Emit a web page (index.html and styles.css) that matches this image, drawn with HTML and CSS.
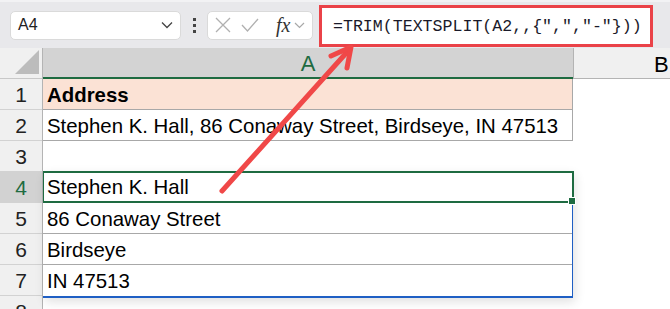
FILE: index.html
```html
<!DOCTYPE html>
<html lang="en">
<head>
  <meta charset="UTF-8">
  <title>TEXTSPLIT</title>
  <link rel="stylesheet" href="styles.css">
</head>
<body>

<div class="app">
  <!-- formula bar -->
  <div class="toolbar">
    <div class="namebox">
      <span>A4</span>
      <svg width="12" height="8" viewBox="0 0 12 8"><path d="M1 1.5 L6 6.5 L11 1.5" fill="none" stroke="#444" stroke-width="1.3"/></svg>
    </div>
    <div class="dots"><i></i><i></i><i></i></div>
    <div class="fnbox">
      <svg width="16" height="16" viewBox="0 0 16 16"><path d="M1 1 L15 15 M15 1 L1 15" stroke="#b0b0b0" stroke-width="1.3"/></svg>
      <svg width="18" height="14" viewBox="0 0 18 14"><path d="M1 7 L6.5 13 L17 1" fill="none" stroke="#b0b0b0" stroke-width="1.3"/></svg>
      <span class="fx">fx</span>
      <svg width="11" height="7" viewBox="0 0 11 7"><path d="M1 1 L5.5 5.5 L10 1" fill="none" stroke="#a8a8a8" stroke-width="1.2"/></svg>
    </div>
    <div class="formula">=TRIM(TEXTSPLIT(A2,,{",","-"}))</div>
  </div>

  <!-- sheet -->
  <div class="sheet">
    <div class="rowheads">
      <div class="corner"><span class="tri"></span></div>
      <div class="rh">1</div>
      <div class="rh">2</div>
      <div class="rh">3</div>
      <div class="rh active">4</div>
      <div class="rh">5</div>
      <div class="rh">6</div>
      <div class="rh">7</div>
      <div class="rh">8</div>
    </div>

    <div class="cola">
      <div class="colhead active">A</div>
      <div class="cell head">Address</div>
      <div class="cell boxed">Stephen K. Hall, 86 Conaway Street, Birdseye, IN 47513</div>
      <div class="cell blank"></div>
      <div class="spill">
        <div class="cell sel">Stephen K. Hall<span class="handle"></span></div>
        <div class="cell line">86 Conaway Street</div>
        <div class="cell line">Birdseye</div>
        <div class="cell">IN 47513</div>
      </div>
    </div>

    <div class="colb">
      <div class="colhead">B</div>
    </div>
  </div>

  <svg class="arrow" width="670" height="309" viewBox="0 0 670 309">
    <g stroke="#f04848" stroke-width="5" stroke-linecap="round" stroke-linejoin="round" fill="none">
      <path d="M222 191 L348 51"/>
      <path d="M331 56 L351 47 L347 68"/>
    </g>
  </svg>
</div>

</body>
</html>
```

FILE: styles.css
```css
body {
  margin: 0;
  font-family: "Liberation Sans", Arial, sans-serif;
  background-color: #fff;
  color: #000;
}
.app {
  position: relative;
  width: 670px;
  height: 309px;
  overflow: hidden;
}
.toolbar {
  height: 48px;
  background-color: #e8e8eb;
  border-top: 2px solid #f2f2f4;
  box-sizing: border-box;
  display: flex;
  align-items: center;
  padding-left: 10px;
}
.namebox {
  width: 171px;
  height: 29px;
  box-sizing: border-box;
  background-color: #fff;
  border: 1px solid #dadada;
  border-radius: 5px;
  display: flex;
  align-items: center;
  justify-content: space-between;
  padding: 0 7px 0 7px;
  font-size: 16px;
  color: #222;
}
.dots {
  width: 26px;
  display: flex;
  flex-direction: column;
  align-items: center;
  gap: 3px;
}
.dots i {
  width: 3px;
  height: 3px;
  background-color: #444;
}
.fnbox {
  width: 106px;
  height: 29px;
  box-sizing: border-box;
  background-color: #fff;
  border: 1px solid #dadada;
  border-radius: 5px;
  display: flex;
  align-items: center;
  gap: 10px;
  padding-left: 7px;
}
.fx {
  font-family: "Liberation Serif", serif;
  font-style: italic;
  font-size: 20px;
  color: #333;
  margin-left: 7px;
  margin-right: -6px;
}
.formula {
  margin-left: 6px;
  width: 334px;
  height: 42px;
  box-sizing: border-box;
  border: 3px solid #ea4248;
  background-color: #fff;
  font-family: "Liberation Mono", monospace;
  font-size: 16.6px;
  color: #1a1a2a;
  padding-left: 11px;
  display: flex;
  align-items: center;
  margin-top: 2px;
}
.sheet {
  display: flex;
  font-size: 20.4px;
}
.rowheads {
  width: 42px;
  flex-shrink: 0;
  background-color: #f0f0f0;
  border-right: 1px solid #b4b4b4;
  font-size: 21px;
}
.corner {
  height: 31px;
  box-sizing: border-box;
  border-bottom: 1px solid #c8c8c8;
  display: flex;
  justify-content: flex-end;
  align-items: flex-end;
  padding: 0 3px 4px 0;
}
.tri {
  width: 0;
  height: 0;
  border-left: 24px solid transparent;
  border-bottom: 24px solid #bcbcbc;
}
.rh {
  height: 31px;
  box-sizing: border-box;
  border-bottom: 1px solid #d2d2d2;
  text-align: center;
  line-height: 31px;
  color: #222;
}
.rh.active {
  background-color: #d2d2d2;
  color: #1e6b41;
}
.colhead {
  height: 31px;
  box-sizing: border-box;
  background-color: #f0f0f0;
  border-bottom: 1px solid #b4b4b4;
  text-align: center;
  line-height: 33px;
  font-size: 22px;
}
.colhead.active {
  background-color: #d3d3d3;
  color: #1e6b41;
  border-bottom: 2px solid #1e6b41;
  line-height: 32px;
}
.cola {
  width: 530px;
  flex-shrink: 0;
}
.colb {
  flex: 1;
  min-width: 0;
  overflow: hidden;
}
.colb .colhead {
  border-left: 1px solid #b4b4b4;
  text-align: left;
  padding-left: 80px;
  white-space: nowrap;
}
.cell {
  height: 31px;
  box-sizing: border-box;
  padding-left: 4px;
  line-height: 32px;
  white-space: nowrap;
}
.head {
  background-color: #fbe2d5;
  font-weight: bold;
  border-right: 1px solid #a8a8a8;
  border-bottom: 1px solid #a8a8a8;
}
.boxed {
  border-right: 1px solid #a8a8a8;
  border-bottom: 1px solid #a8a8a8;
}
.spill {
  border-right: 1px solid #1f5fc4;
  border-bottom: 2px solid #1f5fc4;
  box-shadow: 2px 4px 10px rgba(0, 0, 0, 0.12);
  margin-top: -1px;
}
.sel {
  position: relative;
  border: 2px solid #1e6b41;
  border-left-width: 1px;
  margin-right: -2px;
  height: 32px;
  padding-left: 3px;
  line-height: 29px;
}
.handle {
  position: absolute;
  right: -4px;
  bottom: -4px;
  width: 6px;
  height: 6px;
  background-color: #1e6b41;
  border: 1px solid #fff;
}
.line {
  border-bottom: 1px solid #a8a8a8;
}
.arrow {
  position: absolute;
  left: 0;
  top: 0;
}
```
